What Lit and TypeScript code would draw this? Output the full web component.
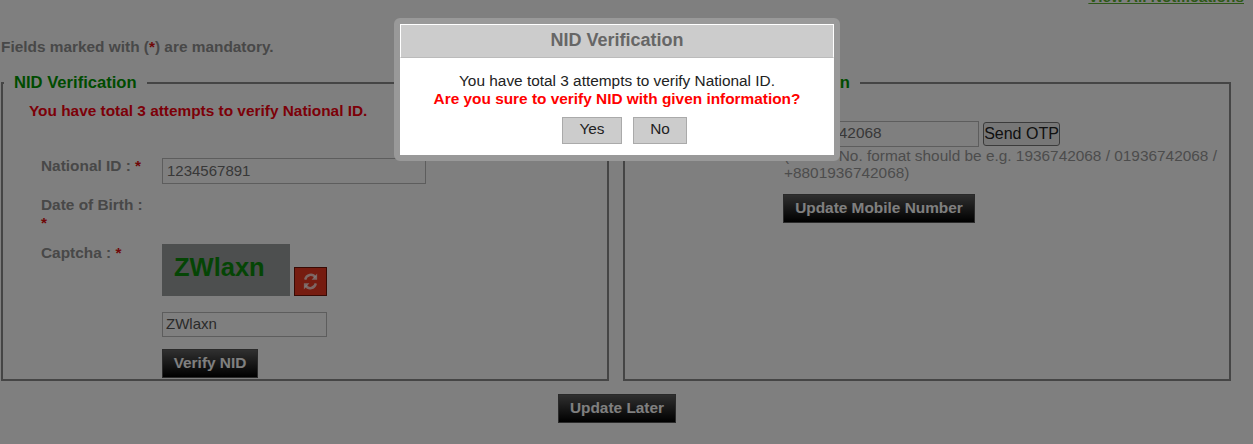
import { LitElement, html, css } from "lit";
import { customElement } from "lit/decorators.js";

@customElement("app-root")
export class AppRoot extends LitElement {
  static styles = css`
    :host {
      display: block;
      position: relative;
      height: 444px;
      overflow: hidden;
      background: #fff;
      font-family: "Liberation Sans", Arial, sans-serif;
      font-size: 15.4px;
      line-height: 18px;
      color: #666;
    }
    .page { padding: 0 1px; }
    .top {
      margin-top: -12px;
      padding-right: 8px;
      text-align: right;
      font-weight: bold;
    }
    .top a { color: #5cb030; text-decoration: underline; }
    .note {
      margin: 32px 0 17px;
      font-weight: bold;
      color: #909090;
    }
    .req { color: #e01010; font-weight: bold; }
    .cols {
      display: grid;
      grid-template-columns: 608px 608px;
      gap: 14px;
    }
    fieldset {
      margin: 0;
      padding: 10px 0 0;
      height: 308px;
      box-sizing: border-box;
      border: 2px solid #8a8a8a;
      min-width: 0;
    }
    legend {
      margin-left: 1px;
      padding: 1px 10px 0;
      font-size: 16.6px;
      font-weight: bold;
      line-height: 18px;
      color: #009800;
    }
    .warn {
      margin: 0 0 37px 26px;
      font-weight: bold;
      color: #f80010;
    }
    .form {
      display: grid;
      grid-template-columns: 121px 1fr;
      row-gap: 12px;
      padding-left: 38px;
    }
    .form.mobile { margin-top: 19px; padding-right: 10px; }
    .lab { font-weight: bold; color: #909090; width: 108px; }
    input {
      box-sizing: border-box;
      height: 26px;
      border: 1px solid #bbb;
      background: #fff;
      font: 15px "Liberation Sans", Arial, sans-serif;
      color: #707070;
      padding: 0 4px 2px;
      margin: 0;
      display: block;
      outline: none;
    }
    .nid { width: 264px; margin-top: 1px; }
    .capt { display: flex; align-items: flex-end; gap: 4px; }
    .captimg {
      width: 128px;
      height: 52px;
      box-sizing: border-box;
      background: #9a9e9e;
      padding: 10px 0 0 12px;
      font-size: 25.5px;
      line-height: 27px;
      font-weight: bold;
      color: #0a8a0a;
    }
    .refresh {
      box-sizing: border-box;
      width: 33px;
      height: 29px;
      background: #ec3820;
      border: 1px solid #701408;
      display: flex;
      align-items: center;
      justify-content: center;
    }
    .capinput { width: 165px; height: 25px; margin-top: 16px; padding: 0 3px 2px; color: #555; }
    .black {
      display: block;
      box-sizing: border-box;
      height: 29px;
      padding: 0 0 2px;
      border: 1px solid #555;
      background: linear-gradient(#606060, #000);
      color: #fff;
      text-align: center;
      white-space: nowrap;
      font: bold 15.4px/25px "Liberation Sans", Arial, sans-serif;
    }
    .verify { margin-top: 12px; width: 96px; }
    .otp { display: flex; align-items: center; gap: 4px; }
    .mob { width: 195px; padding-left: 11px; font-size: 15.4px; }
    .send {
      box-sizing: border-box;
      height: 24px;
      width: 77px;
      padding: 0;
      border: 1px solid #777;
      border-radius: 3px;
      background: #efefef;
      color: #222;
      font: 16px "Liberation Sans", Arial, sans-serif;
    }
    .help { margin: 0 0 13px; line-height: 17px; color: #999; }
    .upd { width: 192px; margin-left: -1px; }
    .laterrow { width: 1232px; display: flex; justify-content: center; margin-top: 13px; }
    .later { width: 118px; }
    .overlay { position: absolute; inset: 0; background: rgba(0, 0, 0, 0.5); }
    .modal {
      position: absolute;
      left: 394px;
      top: 18px;
      width: 446px;
      box-sizing: border-box;
      border: 6px solid #999;
      border-radius: 6px;
      background: #fff;
      background-clip: padding-box;
    }
    .mhead {
      box-sizing: border-box;
      height: 34px;
      background: #ccc;
      border: 1px solid #fff;
      border-bottom: 1px solid #bbb;
      text-align: center;
      font-size: 18px;
      font-weight: bold;
      line-height: 31px;
      color: #666;
    }
    .mbody {
      height: 97px;
      box-sizing: border-box;
      padding-top: 14px;
      text-align: center;
      color: #222;
    }
    .q { font-weight: bold; color: #f00; }
    .acts {
      display: flex;
      justify-content: center;
      gap: 11px;
      margin-top: 9px;
      padding-left: 15px;
    }
    .acts button {
      box-sizing: border-box;
      height: 27px;
      padding: 0 0 3px;
      border: 1px solid #aaa;
      background: #ccc;
      color: #222;
      font: 15.4px "Liberation Sans", Arial, sans-serif;
    }
    .yes { width: 60px; }
    .no { width: 54px; }
  `;

  render() {
    return html`
      <div class="page">
        <div class="top"><a href="#">View All Notifications</a></div>
        <div class="note">Fields marked with (<span class="req">*</span>) are mandatory.</div>
        <div class="cols">
          <fieldset>
            <legend>NID Verification</legend>
            <div class="warn">You have total 3 attempts to verify National ID.</div>
            <div class="form">
              <div class="lab">National ID : <span class="req">*</span></div>
              <input class="nid" .value=${"1234567891"} />
              <div class="lab">Date of Birth : <span class="req">*</span></div>
              <div></div>
              <div class="lab">Captcha : <span class="req">*</span></div>
              <div>
                <div class="capt">
                  <div class="captimg">ZWlaxn</div>
                  <div class="refresh">
                    <svg width="15" height="19" viewBox="0 0 14 16" preserveAspectRatio="none" fill="none">
                      <path d="M11.6 4.6A5.4 5.4 0 0 0 2 6.4" stroke="#fff" stroke-width="2.2" opacity=".75" />
                      <path d="M13.2 1.2V6.6H8Z" fill="#fff" opacity=".75" />
                      <path d="M2.4 11.4A5.4 5.4 0 0 0 12 9.6" stroke="#fff" stroke-width="2.2" opacity=".75" />
                      <path d="M.8 14.8V9.4H6Z" fill="#fff" opacity=".75" />
                    </svg>
                  </div>
                </div>
                <input class="capinput" .value=${"ZWlaxn"} />
                <button class="black verify">Verify NID</button>
              </div>
            </div>
          </fieldset>
          <fieldset>
            <legend>Mobile Number Verification</legend>
            <div class="form mobile">
              <div class="lab">Mobile No : <span class="req">*</span></div>
              <div>
                <div class="otp">
                  <input class="mob" .value=${"1936742068"} />
                  <button class="send">Send OTP</button>
                </div>
                <div class="help">(Mobile No. format should be e.g. 1936742068 / 01936742068 / +8801936742068)</div>
                <button class="black upd">Update Mobile Number</button>
              </div>
            </div>
          </fieldset>
        </div>
        <div class="laterrow"><button class="black later">Update Later</button></div>
      </div>
      <div class="overlay">
        <div class="modal">
          <div class="mhead">NID Verification</div>
          <div class="mbody">
            <div>You have total 3 attempts to verify National ID.</div>
            <div class="q">Are you sure to verify NID with given information?</div>
            <div class="acts">
              <button class="yes">Yes</button>
              <button class="no">No</button>
            </div>
          </div>
        </div>
      </div>
    `;
  }
}
